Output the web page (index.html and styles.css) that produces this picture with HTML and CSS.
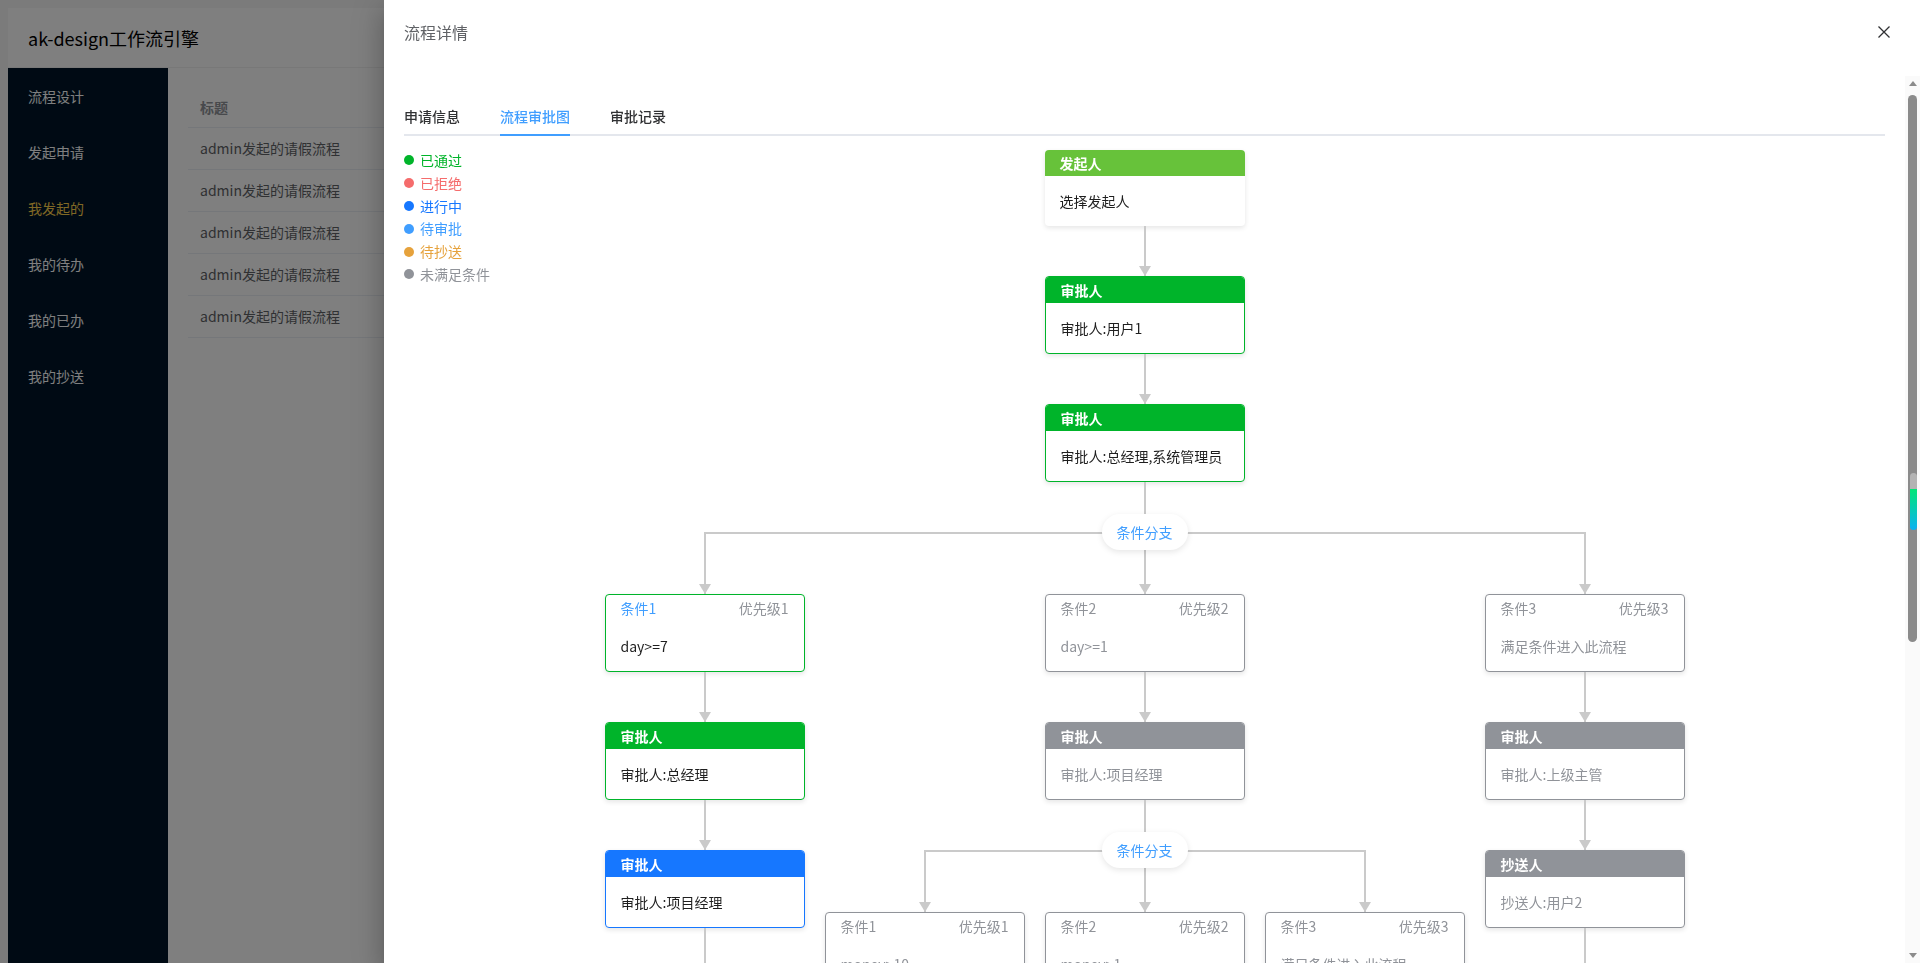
FILE: index.html
```html
<!DOCTYPE html>
<html lang="zh-CN">
<head>
    <meta charset="UTF-8">
    <title>ak-design工作流引擎</title>
    <link rel="stylesheet" href="styles.css">
</head>
<body>

<div class="app">
    <header class="topbar">ak-design工作流引擎</header>
    <div class="layout">
        <aside class="sider">
            <ul class="menu">
                <li>流程设计</li>
                <li>发起申请</li>
                <li class="active">我发起的</li>
                <li>我的待办</li>
                <li>我的已办</li>
                <li>我的抄送</li>
            </ul>
        </aside>
        <main class="main">
            <table class="grid">
                <thead>
                    <tr><th>标题</th></tr>
                </thead>
                <tbody>
                    <tr><td>admin发起的请假流程</td></tr>
                    <tr><td>admin发起的请假流程</td></tr>
                    <tr><td>admin发起的请假流程</td></tr>
                    <tr><td>admin发起的请假流程</td></tr>
                    <tr><td>admin发起的请假流程</td></tr>
                </tbody>
            </table>
        </main>
    </div>
</div>

<div class="mask"></div>

<div class="drawer">
    <div class="drawer-header">
        <span class="drawer-title">流程详情</span>
        <button class="close" type="button">
            <svg width="12" height="12" viewBox="0 0 12 12"><path d="M0.5 0.5L11.5 11.5M11.5 0.5L0.5 11.5" stroke="#303133" stroke-width="1.3" fill="none"/></svg>
        </button>
    </div>
    <div class="drawer-body">
        <div class="tabs">
            <div class="tab">申请信息</div>
            <div class="tab active">流程审批图</div>
            <div class="tab">审批记录</div>
        </div>

        <div class="pane">
            <ul class="legend">
                <li class="ok">已通过</li>
                <li class="reject">已拒绝</li>
                <li class="doing">进行中</li>
                <li class="todo">待审批</li>
                <li class="cc">待抄送</li>
                <li class="skip">未满足条件</li>
            </ul>

            <div class="flow">
                <div class="node start">
                    <div class="hd">发起人</div>
                    <div class="bd">选择发起人</div>
                </div>
                <div class="line"></div>
                <div class="node pass">
                    <div class="hd">审批人</div>
                    <div class="bd">审批人:用户1</div>
                </div>
                <div class="line"></div>
                <div class="node pass">
                    <div class="hd">审批人</div>
                    <div class="bd">审批人:总经理,系统管理员</div>
                </div>

                <div class="branch">
                    <div class="stem"></div>
                    <div class="cols">
                        <span class="pill">条件分支</span>

                        <div class="col">
                            <div class="line in"></div>
                            <div class="node cond pass">
                                <div class="hd"><span class="name">条件1</span><span>优先级1</span></div>
                                <div class="bd">day&gt;=7</div>
                            </div>
                            <div class="line"></div>
                            <div class="node pass">
                                <div class="hd">审批人</div>
                                <div class="bd">审批人:总经理</div>
                            </div>
                            <div class="line"></div>
                            <div class="node doing">
                                <div class="hd">审批人</div>
                                <div class="bd">审批人:项目经理</div>
                            </div>
                            <div class="fill"></div>
                        </div>

                        <div class="col">
                            <div class="line in"></div>
                            <div class="node cond wait">
                                <div class="hd"><span class="name">条件2</span><span>优先级2</span></div>
                                <div class="bd">day&gt;=1</div>
                            </div>
                            <div class="line"></div>
                            <div class="node wait">
                                <div class="hd">审批人</div>
                                <div class="bd">审批人:项目经理</div>
                            </div>

                            <div class="branch">
                                <div class="stem"></div>
                                <div class="cols">
                                    <span class="pill">条件分支</span>
                                    <div class="col">
                                        <div class="line in"></div>
                                        <div class="node cond wait">
                                            <div class="hd"><span class="name">条件1</span><span>优先级1</span></div>
                                            <div class="bd">money&gt;10</div>
                                        </div>
                                        <div class="line"></div>
                                        <div class="node wait">
                                            <div class="hd">审批人</div>
                                            <div class="bd">审批人:总经理</div>
                                        </div>
                                        <div class="fill"></div>
                                    </div>
                                    <div class="col">
                                        <div class="line in"></div>
                                        <div class="node cond wait">
                                            <div class="hd"><span class="name">条件2</span><span>优先级2</span></div>
                                            <div class="bd">money&gt;1</div>
                                        </div>
                                        <div class="line"></div>
                                        <div class="node wait">
                                            <div class="hd">审批人</div>
                                            <div class="bd">审批人:用户1</div>
                                        </div>
                                        <div class="fill"></div>
                                    </div>
                                    <div class="col">
                                        <div class="line in"></div>
                                        <div class="node cond wait">
                                            <div class="hd"><span class="name">条件3</span><span>优先级3</span></div>
                                            <div class="bd">满足条件进入此流程</div>
                                        </div>
                                        <div class="line"></div>
                                        <div class="node wait">
                                            <div class="hd">审批人</div>
                                            <div class="bd">审批人:上级主管</div>
                                        </div>
                                        <div class="fill"></div>
                                    </div>
                                </div>
                                <div class="stem"></div>
                            </div>
                            <div class="fill"></div>
                        </div>

                        <div class="col">
                            <div class="line in"></div>
                            <div class="node cond wait">
                                <div class="hd"><span class="name">条件3</span><span>优先级3</span></div>
                                <div class="bd">满足条件进入此流程</div>
                            </div>
                            <div class="line"></div>
                            <div class="node wait">
                                <div class="hd">审批人</div>
                                <div class="bd">审批人:上级主管</div>
                            </div>
                            <div class="line"></div>
                            <div class="node wait">
                                <div class="hd">抄送人</div>
                                <div class="bd">抄送人:用户2</div>
                            </div>
                            <div class="fill"></div>
                        </div>
                    </div>
                    <div class="line"></div>
                </div>

                <div class="end">流程结束</div>
            </div>
        </div>
    </div>

    <!-- scrollbar of the drawer body (the browser hides the native one) -->
    <div class="vscroll">
        <i class="up"></i>
        <i class="thumb"></i>
        <i class="tip"></i>
        <i class="down"></i>
    </div>
</div>

</body>
</html>
```

FILE: styles.css
```css
*, *::before, *::after {
  box-sizing: border-box;
}

body {
  background-color: #f6f6f6;
  font-family: "Noto Sans CJK SC", "Noto Sans", sans-serif;
  font-size: 14px;
  color: #303133;
  overflow: hidden;
}

ul {
  list-style: none;
  margin: 0;
  padding: 0;
}

/* page behind the drawer */
.app {
  height: calc(100vh - 8px);
  display: flex;
  flex-direction: column;
  background-color: #fff;
}

.topbar {
  height: 60px;
  flex: none;
  padding-left: 20px;
  line-height: 60px;
  font-size: 18px;
  color: #000;
  border-bottom: 1px solid #f0f0f0;
}

.layout {
  flex: 1;
  display: flex;
  min-height: 0;
}

.sider {
  width: 160px;
  flex: none;
  background-color: #001529;
}

.menu li {
  height: 56px;
  line-height: 56px;
  padding-left: 20px;
  color: #fff;

  &.active { color: #ffd04b; }
}

.main {
  flex: 1;
  padding: 17px 20px;
}

.grid {
  width: 100%;
  border-collapse: collapse;

  th, td {
    height: 42px;
    padding: 0 12px;
    text-align: left;
    border-bottom: 1px solid #ebeef5;
    white-space: nowrap;
  }
  th {
    padding-top: 3px;
    color: #909399;
    font-weight: bold;
  }
  td { color: #606266; }
}

.mask {
  position: fixed;
  inset: 0;
  background-color: rgba(0, 0, 0, 0.5);
}

/* drawer */
.drawer {
  position: fixed;
  top: 0; right: 0; bottom: 0;
  width: 80%;
  display: flex;
  flex-direction: column;
  background-color: #fff;
  box-shadow:
    0 8px 10px -5px rgba(0, 0, 0, 0.2),
    0 16px 24px 2px rgba(0, 0, 0, 0.14),
    0 6px 30px 5px rgba(0, 0, 0, 0.12);
}

.drawer-header {
  display: flex;
  align-items: center;
  padding: 20px 20px 0;
  margin-bottom: 32px;
}

.drawer-title {
  flex: 1;
  font-size: 16px;
  line-height: 24px;
  color: #606266;
}

.close {
  width: 16px;
  height: 16px;
  margin-right: 8px;
  padding: 0;
  border: 0;
  background: none;
  display: flex;
  align-items: center;
  justify-content: center;
}

.drawer-body {
  flex: 1;
  overflow-y: auto;
  padding: 20px 35px 20px 20px;
  scrollbar-width: none;

  &::-webkit-scrollbar { display: none; }
}

.vscroll {
  position: absolute;
  top: 76px; right: 0; bottom: 0;
  width: 15px;
  background-color: #fafafa;

  i { position: absolute; }

  .up, .down {
    left: 3.5px;
    border: 4px solid transparent;
  }
  .up {
    top: 5px;
    border-top: 0;
    border-bottom: 5px solid #8b8b8b;
  }
  .down {
    bottom: 5px;
    border-bottom: 0;
    border-top: 5px solid #8b8b8b;
  }
  .thumb {
    left: 3px; top: 19px;
    width: 9px;
    height: 547px;
    border-radius: 5px;
    background-color: #8b8b8b;
  }
  .tip {
    left: 5px; top: 397px;
    width: 7px;
    height: 57px;
    border-radius: 4px;
    background: linear-gradient(#b3b3b3 0 16px, #00e676 16px, #0bb0f2 100%);
  }
}

.tabs {
  display: flex;
  height: 40px;
  margin-bottom: 14px;
  box-shadow: inset 0 -2px 0 #e4e7ed;

  .tab {
    padding: 0 20px;
    line-height: 40px;
    font-weight: 500;
    color: #303133;

    &:first-child { padding-left: 0; }
    &:last-child { padding-right: 0; }
    &.active {
      color: #409eff;
      background: linear-gradient(#409eff, #409eff) no-repeat 20px 100% / calc(100% - 40px) 2px;
    }
  }
}

.pane {
  position: relative;
}

.legend {
  position: absolute;
  left: 0; top: -1px;

  li {
    display: flex;
    align-items: center;
    line-height: 22.8px;
    color: var(--c);

    &::before {
      content: '';
      width: 10px;
      height: 10px;
      margin-right: 6px;
      border-radius: 50%;
      background-color: var(--c);
    }
  }
  .ok { --c: #00b42a; }
  .reject { --c: #f56c6c; }
  .doing { --c: #1677ff; }
  .todo { --c: #409eff; }
  .cc { --c: #e6a23c; }
  .skip { --c: #909399; }
}

/* flow chart */
.flow {
  display: flex;
  flex-direction: column;
  align-items: center;
  padding-bottom: 110px;

  --line: #cacaca;
}

.node {
  width: 200px;
  margin: 0 10px;
  flex: none;
  background-color: #fff;
  border: 1px solid var(--c);
  border-radius: 4px;
  overflow: hidden;
  box-shadow: 0 2px 5px rgba(0, 0, 0, 0.1);

  .hd {
    height: 26px;
    padding: 0 15px;
    line-height: 26px;
    font-weight: bold;
    color: #fff;
    background-color: var(--c);
  }
  .bd {
    height: 50px;
    padding: 0 15px;
    line-height: 50px;
    color: #1f1f1f;
    white-space: nowrap;
  }

  &.start { border: 0; --c: #67c23a; }
  &.pass { --c: #00b42a; }
  &.doing { --c: #1677ff; }
  &.wait { --c: #909399; }
  &.wait .bd { color: #909399; }

  &.cond .hd {
    display: flex;
    justify-content: space-between;
    font-weight: normal;
    color: #909399;
    background: none;
  }
  &.cond.pass .name { color: #409eff; }
}

.line {
  position: relative;
  width: 2px;
  height: 50px;
  flex: none;
  background-color: var(--line);

  &::after {
    content: '';
    position: absolute;
    left: -5px; bottom: 0;
    border: 6px solid transparent;
    border-top: 10px solid var(--line);
    border-bottom: 0;
  }
  &.in { height: 62px; }
}

.stem {
  width: 2px;
  height: 50px;
  flex: none;
  background-color: var(--line);
}

.fill {
  flex: 1;
  width: 2px;
  min-height: 40px;
  background-color: var(--line);
}

.branch {
  display: flex;
  flex-direction: column;
  align-items: center;
}

.cols {
  position: relative;
  display: flex;
  align-items: stretch;

  .pill {
    position: absolute;
    z-index: 1;
    left: 50%; top: -18px;
    transform: translateX(-50%);
    height: 36px;
    padding: 0 15px;
    line-height: 36px;
    white-space: nowrap;
    color: #409eff;
    background-color: #fff;
    border-radius: 18px;
    box-shadow: 0 2px 6px rgba(0, 0, 0, 0.1);
  }
}

.col {
  position: relative;
  display: flex;
  flex-direction: column;
  align-items: center;

  &::before, &::after {
    content: '';
    position: absolute;
    left: 0; right: 0;
    height: 2px;
    background-color: var(--line);
  }
  &::before { top: 0; }
  &::after { bottom: 0; }

  &:first-of-type::before, &:first-of-type::after { left: calc(50% - 1px); }
  &:last-of-type::before, &:last-of-type::after { right: calc(50% - 1px); }
}

.end {
  padding: 8px 20px;
  line-height: 20px;
  border-radius: 18px;
  color: #909399;
  background-color: #f2f3f5;
}
```
